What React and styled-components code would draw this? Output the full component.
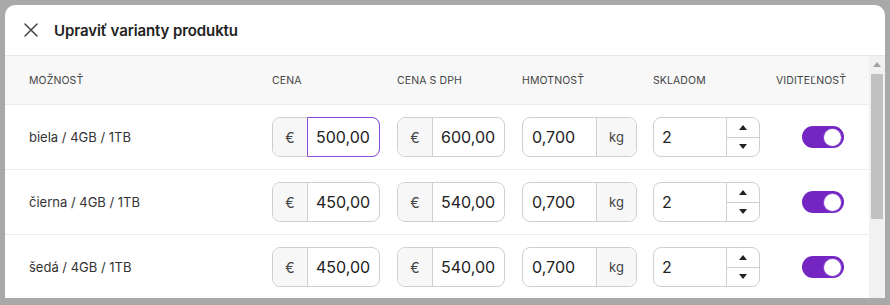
import styled, { createGlobalStyle } from "styled-components";

const GlobalStyle = createGlobalStyle`
  html, body {
    margin: 0;
    padding: 0;
    background: #a9a9a9;
    font-family: "Inter", "Noto Sans", sans-serif;
    overflow: hidden;
  }
  * { box-sizing: border-box; }
`;

const Backdrop = styled.div`
  width: 890px;
  height: 305px;
  padding: 5px 5px 7px 5px;
`;

const Modal = styled.div`
  background: #fff;
  border-radius: 10px 10px 0 0;
  height: 100%;
  display: flex;
  flex-direction: column;
  overflow: hidden;
`;

const ModalHeader = styled.div`
  height: 51px;
  flex-shrink: 0;
  display: flex;
  align-items: center;
  gap: 15px;
  padding: 0 18px;
  border-bottom: 1px solid #e6e6e6;
`;

const CloseButton = styled.button`
  width: 16px;
  height: 16px;
  padding: 0;
  border: none;
  background: none;
  display: flex;
  align-items: center;
  justify-content: center;
  cursor: pointer;
`;

const Title = styled.h2`
  margin: 0;
  font-size: 15px;
  font-weight: 600;
  color: #222;
  letter-spacing: -0.1px;
`;

const Body = styled.div`
  flex: 1;
  display: flex;
  min-height: 0;
`;

const Table = styled.div`
  flex: 1;
  overflow: hidden;
`;

const ScrollTrack = styled.div`
  width: 16px;
  flex-shrink: 0;
  background: #f1f1f1;
  display: flex;
  flex-direction: column;
  align-items: center;
`;

const ScrollArrow = styled.div`
  height: 17px;
  width: 100%;
  display: flex;
  align-items: center;
  justify-content: center;
`;

const ScrollThumb = styled.div`
  width: 12px;
  height: 145px;
  margin-top: 1px;
  background: #c1c1c1;
`;

const Grid = styled.div`
  display: grid;
  grid-template-columns: 243px 125px 125px 131px 123px 1fr;
  padding: 0 24px;
  align-items: center;
  height: ${(p) => (p.$head ? "49px" : "65px")};
  background: ${(p) => (p.$head ? "#f8f8f8" : "#fff")};
  border-bottom: 1px solid #ebebeb;
`;

const HeadCell = styled.div`
  font-size: 10.5px;
  font-weight: 400;
  color: #444;
  text-transform: uppercase;
  letter-spacing: 0.1px;
`;

const Label = styled.div`
  font-size: 13px;
  color: #333;
`;

const Group = styled.div`
  display: flex;
  height: 40px;
  width: ${(p) => p.$w}px;
  border: 1px solid #cfcfcf;
  border-radius: 8px;
`;

const Addon = styled.div`
  width: ${(p) => p.$w}px;
  flex-shrink: 0;
  display: flex;
  align-items: center;
  justify-content: center;
  background: #f7f7f7;
  color: #444;
  font-size: ${(p) => p.$fs || 14}px;
  border-${(p) => (p.$end ? "left" : "right")}: 1px solid #cfcfcf;
  border-radius: ${(p) => (p.$end ? "0 7px 7px 0" : "7px 0 0 7px")};
`;

const Field = styled.div`
  flex: 1;
  display: flex;
  align-items: center;
  padding-left: ${(p) => p.$pl || 8}px;
  font-size: 16px;
  color: #222;
  margin: ${(p) => (p.$focus ? "-1px -1px -1px -1px" : "0")};
  border: ${(p) => (p.$focus ? "1px solid #8d4be0" : "none")};
  border-radius: ${(p) => (p.$focus ? "0 8px 8px 0" : "0")};
`;

const Spinner = styled.div`
  width: 33px;
  flex-shrink: 0;
  display: flex;
  flex-direction: column;
  border-left: 1px solid #cfcfcf;
`;

const SpinBtn = styled.div`
  flex: 1;
  display: flex;
  align-items: center;
  justify-content: center;
  & + & {
    border-top: 1px solid #cfcfcf;
  }
`;

const Toggle = styled.div`
  justify-self: end;
  width: 42px;
  height: 22px;
  border-radius: 11px;
  background: #7425c2;
  position: relative;
  margin-right: 1px;
`;

const Knob = styled.span`
  position: absolute;
  right: 3px;
  top: 2.5px;
  width: 17px;
  height: 17px;
  border-radius: 50%;
  background: #fff;
  box-shadow: 0 0 0 1px #8a4fd0;
`;

const Triangle = ({ up, color = "#222" }) => (
  <svg width="8" height="5" viewBox="0 0 8 5">
    <path d={up ? "M0 5 L4 0 L8 5 Z" : "M0 0 L4 5 L8 0 Z"} fill={color} />
  </svg>
);

const rows = [
  { name: "biela / 4GB / 1TB", price: "500,00", vat: "600,00", focus: true },
  { name: "čierna / 4GB / 1TB", price: "450,00", vat: "540,00" },
  { name: "šedá / 4GB / 1TB", price: "450,00", vat: "540,00" },
];

export default function App() {
  return (
    <Backdrop>
      <GlobalStyle />
      <Modal>
        <ModalHeader>
          <CloseButton>
            <svg width="14" height="14" viewBox="0 0 14 14">
              <path d="M1 1 L13 13 M13 1 L1 13" stroke="#444" strokeWidth="1.5" strokeLinecap="round" />
            </svg>
          </CloseButton>
          <Title>Upraviť varianty produktu</Title>
        </ModalHeader>
        <Body>
          <Table>
            <Grid $head>
              <HeadCell>Možnosť</HeadCell>
              <HeadCell>Cena</HeadCell>
              <HeadCell>Cena s DPH</HeadCell>
              <HeadCell>Hmotnosť</HeadCell>
              <HeadCell>Skladom</HeadCell>
              <HeadCell>Viditeľnosť</HeadCell>
            </Grid>
            {rows.map((r) => (
              <Grid key={r.name}>
                <Label>{r.name}</Label>
                <Group $w={108}>
                  <Addon $w={35}>€</Addon>
                  <Field $focus={r.focus}>{r.price}</Field>
                </Group>
                <Group $w={108}>
                  <Addon $w={35}>€</Addon>
                  <Field>{r.vat}</Field>
                </Group>
                <Group $w={115}>
                  <Field $pl={9}>0,700</Field>
                  <Addon $w={40} $end $fs={13}>kg</Addon>
                </Group>
                <Group $w={107}>
                  <Field $pl={8}>2</Field>
                  <Spinner>
                    <SpinBtn><Triangle up /></SpinBtn>
                    <SpinBtn><Triangle /></SpinBtn>
                  </Spinner>
                </Group>
                <Toggle>
                  <Knob />
                </Toggle>
              </Grid>
            ))}
          </Table>
          <ScrollTrack>
            <ScrollArrow>
              <Triangle up color="#a3a3a3" />
            </ScrollArrow>
            <ScrollThumb />
          </ScrollTrack>
        </Body>
      </Modal>
    </Backdrop>
  );
}
